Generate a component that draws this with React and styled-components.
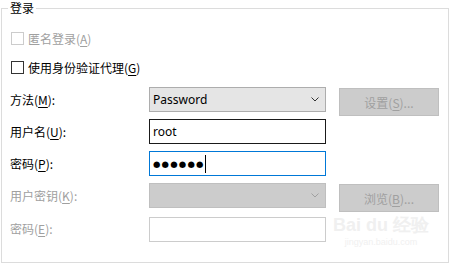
import React from "react";
import styled, { createGlobalStyle } from "styled-components";

const GlobalStyle = createGlobalStyle`
  body {
    margin: 0;
    background: #ffffff;
    font-family: "Noto Sans CJK SC", "Noto Sans", sans-serif;
    font-size: 12px;
    color: #000;
  }
`;

const Page = styled.div`
  width: 450px;
  height: 266px;
  padding: 8px 0 0 1px;
  box-sizing: border-box;
  position: relative;
  overflow: hidden;
`;

const Group = styled.div`
  position: relative;
  width: 448px;
  height: 255px;
  box-sizing: border-box;
  border: 1px solid #dcdcdc;
  padding: 19px 0 0 8px;
  display: flex;
  flex-direction: column;
`;

const Title = styled.span`
  position: absolute;
  top: -10px;
  left: 6px;
  padding: 0 2px;
  background: #fff;
  line-height: 18px;
`;

const CheckRow = styled.label`
  display: flex;
  align-items: center;
  height: 20px;
  margin-top: ${(p) => p.$gap || 0}px;
  color: ${(p) => (p.$disabled ? "#a0a0a0" : "#000")};
`;

const Box = styled.span`
  width: 13px;
  height: 13px;
  box-sizing: border-box;
  margin-left: 1px;
  margin-right: 4px;
  border: 1px solid ${(p) => (p.$disabled ? "#cccccc" : "#333333")};
  background: #fff;
`;

const Form = styled.div`
  display: grid;
  grid-template-columns: 126px 177px 100px;
  column-gap: 13px;
  grid-template-rows: 25px 25px 25px 25px 25px;
  row-gap: 7px;
  margin-top: 10px;
`;

const Label = styled.div`
  display: flex;
  align-items: center;
  margin-top: ${(p) => p.$shift || 0}px;
  color: ${(p) => (p.$disabled ? "#a0a0a0" : "#000")};
`;

const Key = styled.span`
  text-decoration: underline;
  text-underline-offset: 2px;
`;

const Field = styled.div`
  display: flex;
  align-items: center;
  box-sizing: border-box;
  height: 25px;
  margin-top: ${(p) => p.$shift || 0}px;
  padding: 0 6px 0 3px;
  border: 1px solid ${(p) => p.$border};
  background: ${(p) => p.$bg || "#fff"};
  font-family: "Noto Sans", "Noto Sans CJK SC", sans-serif;
  font-size: 12px;
`;

const Grow = styled.span`
  flex: 1;
`;

const Dots = styled.span`
  font-family: "DejaVu Sans", sans-serif;
  font-size: 8.5px;
  letter-spacing: 1.2px;
  color: #000;
`;

const Caret = styled.span`
  width: 1px;
  height: 18px;
  background: #000;
`;

const Button = styled.div`
  align-self: start;
  height: 28px;
  margin-top: ${(p) => (p.$shift || 0) + 1}px;
  box-sizing: border-box;
  border: 1px solid #bfbfbf;
  background: #cccccc;
  color: #a0a0a0;
  display: flex;
  align-items: center;
  justify-content: center;
`;

const Watermark = styled.div`
  position: absolute;
  left: 333px;
  top: 216px;
  color: #f0f0f0;
  font-family: "Liberation Sans", sans-serif;
  line-height: 1;
  text-align: center;
`;

const WmBig = styled.div`
  font-size: 18px;
  font-weight: bold;
`;

const WmSmall = styled.div`
  font-size: 9px;
  margin-top: 4px;
`;

const Chevron = ({ color }) => (
  <svg width="8" height="5" viewBox="0 0 8 5">
    <path d="M0.5 0.5 L4 4 L7.5 0.5" fill="none" stroke={color} strokeWidth="1" />
  </svg>
);

export default function App() {
  return (
    <Page>
      <GlobalStyle />
      <Group>
        <Title>登录</Title>
        <CheckRow $disabled>
          <Box $disabled />
          匿名登录(<Key>A</Key>)
        </CheckRow>
        <CheckRow $gap={9}>
          <Box />
          使用身份验证代理(<Key>G</Key>)
        </CheckRow>
        <Form>
          <Label>方法(<Key>M</Key>):</Label>
          <Field $border="#adadad" $bg="#e5e5e5">
            <Grow>Password</Grow>
            <Chevron color="#333" />
          </Field>
          <Button>设置(<Key>S</Key>)...</Button>

          <Label>用户名(<Key>U</Key>):</Label>
          <Field $border="#1a1a1a">root</Field>
          <span />

          <Label>密码(<Key>P</Key>):</Label>
          <Field $border="#0078d7">
            <Dots>●●●●●●</Dots>
            <Caret />
          </Field>
          <span />

          <Label $disabled>用户密钥(<Key>K</Key>):</Label>
          <Field $border="#bfbfbf" $bg="#cccccc">
            <Grow />
            <Chevron color="#a0a0a0" />
          </Field>
          <Button>浏览(<Key>B</Key>)...</Button>

          <Label $disabled $shift={2}>密码(<Key>E</Key>):</Label>
          <Field $border="#cccccc" $shift={2} />
          <span />
        </Form>
      </Group>
      <Watermark>
        <WmBig>Bai du 经验</WmBig>
        <WmSmall>jingyan.baidu.com</WmSmall>
      </Watermark>
    </Page>
  );
}
